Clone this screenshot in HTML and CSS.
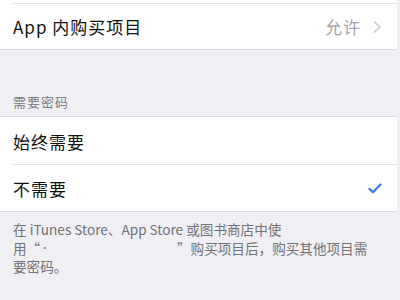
FILE: index.html
```html
<!DOCTYPE html>
<html lang="zh">
<head>
<meta charset="utf-8">
<link rel="stylesheet" href="styles.css">
</head>
<body>
<div class="page">
  <div class="group group-first">
    <div class="cell">
      <span class="label">App 内购买项目</span>
      <span class="detail">允许
        <svg class="chev" width="9" height="12" viewBox="0 0 9 12"><path d="M1.5 1 L7 6 L1.5 11" fill="none" stroke="#c7c7cc" stroke-width="1.6" stroke-linecap="round" stroke-linejoin="round"/></svg>
      </span>
    </div>
  </div>
  <div class="header">需要密码</div>
  <div class="group">
    <div class="cell cell-sep">
      <span class="label">始终需要</span>
    </div>
    <div class="cell">
      <span class="label">不需要</span>
      <svg class="check" width="14" height="11" viewBox="0 0 14 11"><path d="M1.5 6 L5 9.3 L12.5 1.5" fill="none" stroke="#3478f6" stroke-width="2.2" stroke-linecap="round" stroke-linejoin="round"/></svg>
    </div>
  </div>
  <div class="footer">
    <div class="fline">在 iTunes Store、App Store 或图书商店中使</div>
    <div class="fline"><span class="fa">用“<span class="dot">·</span></span><span class="fb">”购买项目后，购买其他项目需</span></div>
    <div class="fline">要密码。</div>
  </div>
</div>
</body>
</html>
```
FILE: styles.css
```css
html, body {
  margin: 0;
  padding: 0;
  background: #efeff4;
}
body {
  font-family: "Noto Sans CJK SC", "Noto Sans", "Liberation Sans", sans-serif;
  color: #111;
}
.page {
  width: 397px;
  height: 300px;
  overflow: hidden;
}
.group {
  background: #fff;
  border-top: 1px solid #d9d9de;
  border-bottom: 1px solid #d9d9de;
}
.group-first {
  border-top: none;
  padding-top: 3px;
}
.group-first .cell {
  border-top: 1px solid #e2e2e6;
  margin-left: 13px;
  padding-left: 0;
  height: 46px;
}
.cell {
  display: flex;
  align-items: center;
  justify-content: space-between;
  height: 48px;
  padding: 0 15px 0 13px;
  box-sizing: border-box;
}
.cell-sep {
  position: relative;
}
.cell-sep::after {
  content: "";
  position: absolute;
  left: 13px;
  right: 0;
  bottom: 0;
  border-bottom: 1px solid #e2e2e6;
}
.group .cell + .cell {
  height: 46px;
}
.label {
  font-size: 17px;
  letter-spacing: 1px;
}
.detail {
  display: flex;
  align-items: center;
  gap: 12px;
  font-size: 17px;
  letter-spacing: 1px;
  color: #a4a4a8;
}
.chev {
  display: block;
}
.check {
  display: block;
  margin-right: 0;
}
.header {
  height: 66px;
  box-sizing: border-box;
  padding: 43px 0 0 13px;
  font-size: 13px;
  letter-spacing: 1px;
  line-height: 18px;
  color: #7a7a80;
}
.footer {
  padding: 8px 0 0 13px;
  font-size: 13.6px;
  line-height: 18.5px;
  color: #727277;
}
.fline {
  white-space: nowrap;
}
.fa {
  display: inline-block;
  width: 164px;
}
.dot {
  font-size: 9px;
  vertical-align: 3px;
}
```
